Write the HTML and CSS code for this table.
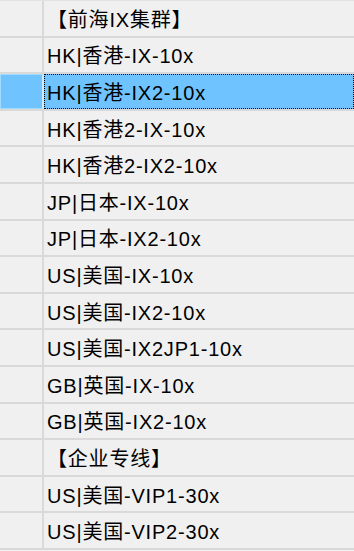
FILE: index.html
```html
<!DOCTYPE html>
<html lang="zh-CN">
<head>
  <meta charset="UTF-8" />
  <meta name="viewport" content="width=device-width, initial-scale=1.0"/>
  <title>节点列表</title>
  <link rel="stylesheet" href="styles.css">
</head>
<body>

  <div class="lista" id="listaNodos">
    <div class="fila"><div class="marca"></div><div class="nombre">【前海IX集群】</div></div>
    <div class="fila"><div class="marca"></div><div class="nombre">HK|香港-IX-10x</div></div>
    <div class="fila activa"><div class="marca"></div><div class="nombre">HK|香港-IX2-10x</div></div>
    <div class="fila"><div class="marca"></div><div class="nombre">HK|香港2-IX-10x</div></div>
    <div class="fila"><div class="marca"></div><div class="nombre">HK|香港2-IX2-10x</div></div>
    <div class="fila"><div class="marca"></div><div class="nombre">JP|日本-IX-10x</div></div>
    <div class="fila"><div class="marca"></div><div class="nombre">JP|日本-IX2-10x</div></div>
    <div class="fila"><div class="marca"></div><div class="nombre">US|美国-IX-10x</div></div>
    <div class="fila"><div class="marca"></div><div class="nombre">US|美国-IX2-10x</div></div>
    <div class="fila"><div class="marca"></div><div class="nombre">US|美国-IX2JP1-10x</div></div>
    <div class="fila"><div class="marca"></div><div class="nombre">GB|英国-IX-10x</div></div>
    <div class="fila"><div class="marca"></div><div class="nombre">GB|英国-IX2-10x</div></div>
    <div class="fila"><div class="marca"></div><div class="nombre">【企业专线】</div></div>
    <div class="fila"><div class="marca"></div><div class="nombre">US|美国-VIP1-30x</div></div>
    <div class="fila"><div class="marca"></div><div class="nombre">US|美国-VIP2-30x</div></div>
  </div>

</body>
</html>
```

FILE: styles.css
```css
body {
  margin: 0;
  background: #f0f0f0;
  color: #000;
  font-family: "Liberation Sans", "Noto Sans CJK SC", sans-serif;
  font-size: 20px;
  overflow: hidden;
}

.lista {
  border-top: 1px solid #e2e2e2;
}

.fila {
  display: grid;
  grid-template-columns: 44px 1fr;
  height: 36.6px;
  box-sizing: border-box;
  border-bottom: 2px solid #d9d9d9;
}

.marca {
  border-right: 2px solid #d9d9d9;
}

.nombre {
  display: flex;
  align-items: center;
  padding-left: 3px;
  letter-spacing: 0.8px;
  white-space: nowrap;
}

.fila.activa {
  background: #6fc4ff;
}

.fila.activa .marca {
  border: 1px solid #a3dbff;
  border-right: 2px solid #cfeaff;
}

.fila.activa .nombre {
  outline: 1px dotted #000;
  outline-offset: -1px;
}
```
